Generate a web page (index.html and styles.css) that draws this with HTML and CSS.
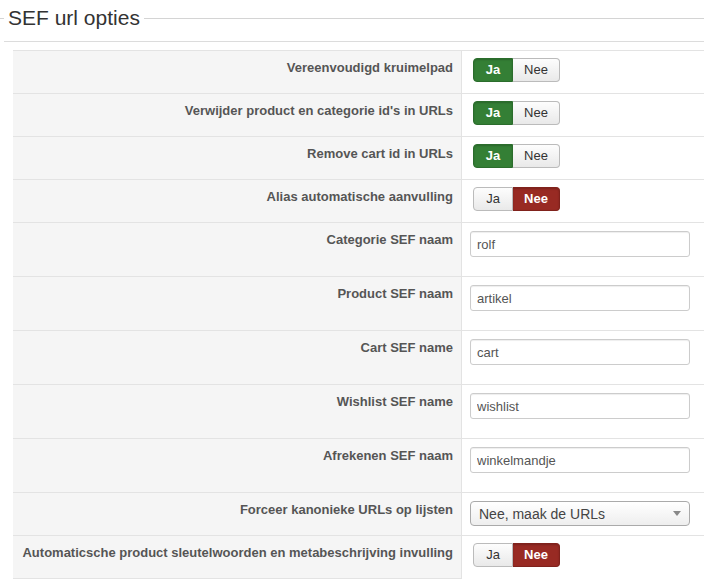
FILE: index.html
```html
<!DOCTYPE html>
<html>
<head>
    <title>SEF url opties</title>
    <link rel="stylesheet" href="styles.css">
</head>
<body>
    <fieldset class="options">
        <legend>SEF url opties</legend>
        <div class="rule"></div>

        <table class="option-table">
            <tr class="row-toggle">
                <td class="label">Vereenvoudigd kruimelpad</td>
                <td class="field">
                    <div class="yesno"><span class="btn yes active">Ja</span><span class="btn no">Nee</span></div>
                </td>
            </tr>
            <tr class="row-toggle">
                <td class="label">Verwijder product en categorie id's in URLs</td>
                <td class="field">
                    <div class="yesno"><span class="btn yes active">Ja</span><span class="btn no">Nee</span></div>
                </td>
            </tr>
            <tr class="row-toggle">
                <td class="label">Remove cart id in URLs</td>
                <td class="field">
                    <div class="yesno"><span class="btn yes active">Ja</span><span class="btn no">Nee</span></div>
                </td>
            </tr>
            <tr class="row-toggle">
                <td class="label">Alias automatische aanvulling</td>
                <td class="field">
                    <div class="yesno"><span class="btn yes">Ja</span><span class="btn no active">Nee</span></div>
                </td>
            </tr>
            <tr>
                <td class="label">Categorie SEF naam</td>
                <td class="field"><input class="text" type="text" value="rolf"></td>
            </tr>
            <tr>
                <td class="label">Product SEF naam</td>
                <td class="field"><input class="text" type="text" value="artikel"></td>
            </tr>
            <tr>
                <td class="label">Cart SEF name</td>
                <td class="field"><input class="text" type="text" value="cart"></td>
            </tr>
            <tr>
                <td class="label">Wishlist SEF name</td>
                <td class="field"><input class="text" type="text" value="wishlist"></td>
            </tr>
            <tr>
                <td class="label">Afrekenen SEF naam</td>
                <td class="field"><input class="text" type="text" value="winkelmandje"></td>
            </tr>
            <tr>
                <td class="label">Forceer kanonieke URLs op lijsten</td>
                <td class="field">
                    <div class="select">
                        <span>Nee, maak de URLs</span>
                        <span class="arrow"></span>
                    </div>
                </td>
            </tr>
            <tr class="row-toggle last">
                <td class="label">Automaticsche product sleutelwoorden en metabeschrijving invulling</td>
                <td class="field">
                    <div class="yesno"><span class="btn yes">Ja</span><span class="btn no active">Nee</span></div>
                </td>
            </tr>
        </table>
    </fieldset>
</body>
</html>
```

FILE: styles.css
```css
body {
    font-family: "Liberation Sans", Arial, sans-serif;
    margin: 0;
    padding: 0;
    color: #333;
    background: #fff;
    overflow: hidden;
}
.options {
    margin: 6px 0 0;
    padding: 0;
    border: 0;
    border-top: 1px solid #d4d4d4;
    min-width: 0;
}
.options legend {
    margin-left: 4px;
    padding: 0 4px;
    font-size: 21px;
    line-height: 24px;
    color: #333;
}
.rule {
    height: 11px;
    margin-left: 4px;
    border-bottom: 1px solid #dcdcdc;
}
.option-table {
    margin: 8px 0 0 13px;
    width: 700px;
    border-collapse: collapse;
}
.option-table td {
    border-top: 1px solid #e3e3e3;
    vertical-align: top;
}
.option-table .last td {
    border-bottom: 1px solid #e3e3e3;
}
.option-table .last .field {
    border-bottom: 0;
}
.label {
    width: 432px;
    padding: 8px 8px 0;
    background: #f5f5f5;
    text-align: right;
    font-size: 13px;
    font-weight: bold;
    line-height: 18px;
    color: #555;
    border-right: 1px solid #e3e3e3;
}
.field {
    padding: 7px 8px 0;
}

/* Ja / Nee switch */
.yesno {
    display: flex;
    margin: 0 0 11px 3px;
}
.btn {
    height: 22px;
    line-height: 22px;
    font-size: 13px;
    text-align: center;
    color: #333;
    border: 1px solid #bbb;
    background: linear-gradient(#fdfdfd, #e9e9e9);
}
.btn.yes {
    width: 38px;
    border-radius: 4px 0 0 4px;
}
.btn.no {
    width: 46px;
    border-left: 0;
    border-radius: 0 4px 4px 0;
}
.btn.yes.active {
    color: #fff;
    font-weight: bold;
    background: #347f35;
    border-color: #2b6d2c;
    box-shadow: inset 0 1px 2px rgba(0, 0, 0, 0.2);
}
.btn.no.active {
    color: #fff;
    font-weight: bold;
    background: #982a23;
    border-color: #80221c;
    box-shadow: inset 0 1px 2px rgba(0, 0, 0, 0.2);
}

.text {
    display: block;
    box-sizing: border-box;
    width: 220px;
    height: 26px;
    margin: 1px 0 19px;
    padding: 0 6px;
    font-family: "Liberation Sans", Arial, sans-serif;
    font-size: 13px;
    color: #555;
    border: 1px solid #ccc;
    border-radius: 3px;
    box-shadow: inset 0 1px 1px rgba(0, 0, 0, 0.07);
}

.select {
    box-sizing: border-box;
    width: 220px;
    height: 25px;
    margin: 1px 0 9px;
    padding: 0 8px;
    display: flex;
    align-items: center;
    justify-content: space-between;
    font-size: 14px;
    color: #444;
    border: 1px solid #aaa;
    border-radius: 4px;
    background: linear-gradient(#ffffff, #eeeeee);
}
.select .arrow {
    width: 0;
    height: 0;
    border-left: 4px solid transparent;
    border-right: 4px solid transparent;
    border-top: 5px solid #888;
}
```
